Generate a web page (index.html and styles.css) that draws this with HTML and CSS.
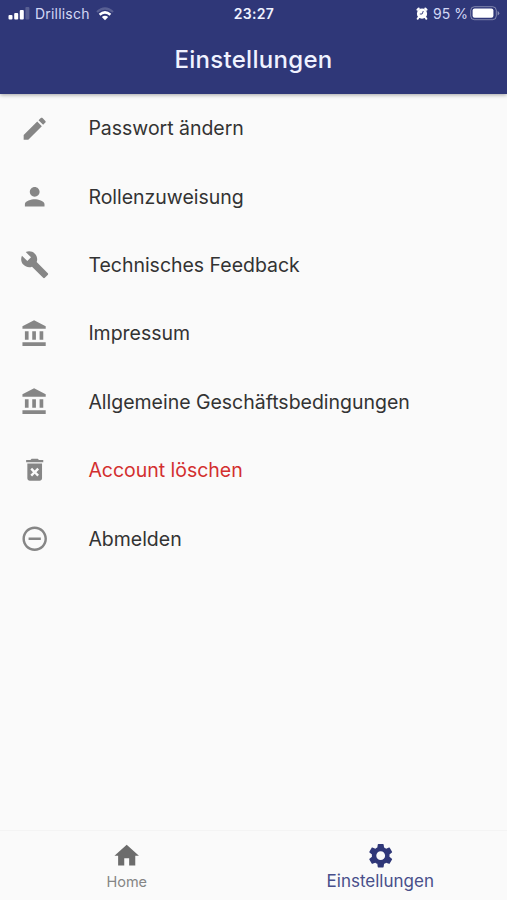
FILE: index.html
```html
<!DOCTYPE html>
<html lang="de">
<head>
<meta charset="utf-8">
<title>Einstellungen</title>
<link rel="stylesheet" href="styles.css">
</head>
<body>
<div class="app">
<header class="header">
<div class="status">
<div class="status-left">
<svg class="signal" width="22" height="13" viewBox="0 0 22 13" fill="#fff">
<rect x="0.5" y="8" width="4" height="4.5" rx="1"/>
<rect x="6.2" y="6" width="4" height="6.5" rx="1"/>
<rect x="11.8" y="3" width="4" height="9.5" rx="1"/>
<rect x="17.4" y="0" width="4" height="12.5" rx="1" opacity=".2"/>
</svg>
<span class="carrier">Drillisch</span>
<svg class="wifi" width="18" height="14" viewBox="0 0 18 14" fill="none" stroke="#fff">
<path d="M1 5Q9-2 17 5" stroke-width="2.3" opacity=".2"/>
<path d="M3.6 7.7Q9 3 14.4 7.7" stroke-width="2.5"/>
<path d="M5.8 10Q9 7.7 12.2 10L9 13.3z" fill="#fff" stroke="none"/>
</svg>
</div>
<span class="time">23:27</span>
<div class="status-right">
<svg class="alarm" width="12" height="13" viewBox="0 0 12 13">
<path d="M1.5 2.7L2.7 1.5M10.5 2.7L9.3 1.5M2.5 10.5L1.7 11.7M9.5 10.5L10.3 11.7" stroke="#fff" stroke-width="2" stroke-linecap="round"/>
<circle cx="6" cy="6.7" r="5.1" fill="#fff"/>
<path d="M7.3 4L6.1 7H3.800" fill="none" stroke="#2f3778" stroke-width=".9"/>
</svg>
<span class="percent">95 %</span>
<svg class="battery" width="30" height="15" viewBox="0 0 30 15">
<rect x=".7" y=".7" width="25.6" height="13" rx="3.8" fill="none" stroke="#fff" opacity=".4"/>
<rect x="2.6" y="2.6" width="20.8" height="9.2" rx="2" fill="#fff"/>
<path d="M27.6 5v4.6q1.700-.8 1.700-2.300t-1.700-2.300z" fill="#fff" opacity=".45"/>
</svg>
</div>
</div>
<h1 class="title">Einstellungen</h1>
</header>
<ul class="list">
<li class="item">
<svg class="icon" viewBox="0 0 24 24"><path d="M3 17.250V21h3.750L17.810 9.940l-3.750-3.750L3 17.250zM20.710 7.040c.39-.39.39-1.020 0-1.410l-2.340-2.340c-.39-.39-1.020-.39-1.410 0l-1.830 1.830 3.750 3.750 1.830-1.830z"/></svg>
<span>Passwort ändern</span>
</li>
<li class="item">
<svg class="icon" viewBox="0 0 24 24"><path d="M12 12c2.210 0 4-1.790 4-4s-1.790-4-4-4-4 1.790-4 4 1.790 4 4 4zm0 2c-2.670 0-8 1.340-8 4v2h16v-2c0-2.660-5.330-4-8-4z"/></svg>
<span>Rollenzuweisung</span>
</li>
<li class="item">
<svg class="icon" viewBox="0 0 24 24"><path d="M22.700 19l-9.100-9.100c.9-2.300.4-5-1.500-6.900-2-2-5-2.400-7.400-1.300L9 6 6 9 1.600 4.700C.4 7.100.9 10.100 2.900 12.100c1.900 1.900 4.600 2.400 6.900 1.500l9.100 9.100c.4.4 1 .4 1.400 0l2.300-2.300c.5-.4.5-1.100.1-1.400z"/></svg>
<span>Technisches Feedback</span>
</li>
<li class="item">
<svg class="icon" viewBox="0 0 24 24"><path d="M4 10v7h3v-7H4zm6 0v7h3v-7h-3zM2 22h19v-3H2v3zm14-12v7h3v-7h-3zm-4.500-9L2 6v2h19V6l-9.500-5z"/></svg>
<span>Impressum</span>
</li>
<li class="item">
<svg class="icon" viewBox="0 0 24 24"><path d="M4 10v7h3v-7H4zm6 0v7h3v-7h-3zM2 22h19v-3H2v3zm14-12v7h3v-7h-3zm-4.500-9L2 6v2h19V6l-9.500-5z"/></svg>
<span>Allgemeine Geschäftsbedingungen</span>
</li>
<li class="item danger">
<svg class="icon" viewBox="0 0 24 24"><path d="M6 19c0 1.100.9 2 2 2h8c1.100 0 2-.9 2-2V7H6v12zm2.460-7.120l1.410-1.410L12 12.590l2.120-2.120 1.410 1.410L13.410 14l2.120 2.120-1.410 1.410L12 15.410l-2.120 2.120-1.410-1.410L10.590 14l-2.130-2.120zM15.500 4l-1-1h-5l-1 1H5v2h14V4z"/></svg>
<span>Account löschen</span>
</li>
<li class="item">
<svg class="icon" viewBox="0 0 24 24"><path d="M7 11v2h10v-2H7zm5-9C6.480 2 2 6.480 2 12s4.480 10 10 10 10-4.480 10-10S17.520 2 12 2zm0 18c-4.410 0-8-3.590-8-8s3.590-8 8-8 8 3.590 8 8-3.590 8-8 8z"/></svg>
<span>Abmelden</span>
</li>
</ul>
<nav class="nav">
<a class="tab home">
<svg class="icon" viewBox="0 0 24 24"><path d="M10 20v-6h4v6h5v-8h3L12 3 2 12h3v8z"/></svg>
<span>Home</span>
</a>
<a class="tab active">
<svg class="icon" viewBox="0 0 24 24"><path d="M19.140 12.940c.04-.3.06-.61.06-.94 0-.32-.02-.64-.07-.94l2.030-1.580c.18-.14.23-.41.12-.61l-1.920-3.320c-.12-.22-.37-.29-.59-.22l-2.390.96c-.5-.38-1.030-.7-1.620-.94l-.36-2.540c-.04-.24-.24-.41-.48-.41h-3.840c-.24 0-.43.17-.47.41l-.36 2.540c-.59.24-1.130.57-1.620.94l-2.390-.96c-.22-.08-.47 0-.59.22L2.740 8.870c-.12.21-.08.47.12.61l2.030 1.580c-.05.3-.09.63-.09.94s.02.64.07.94l-2.030 1.580c-.18.14-.23.41-.12.61l1.920 3.320c.12.22.37.29.59.22l2.390-.96c.5.38 1.030.7 1.620.94l.36 2.540c.05.24.24.41.48.41h3.840c.24 0 .44-.17.47-.41l.36-2.540c.59-.24 1.130-.56 1.620-.94l2.390.96c.22.08.47 0 .59-.22l1.920-3.320c.12-.22.07-.47-.12-.61l-2.010-1.580zM12 15.600c-1.980 0-3.600-1.620-3.600-3.600s1.620-3.600 3.600-3.600 3.600 1.620 3.600 3.600-1.620 3.600-3.600 3.600z"/></svg>
<span>Einstellungen</span>
</a>
</nav>
</div>
</body>
</html>
```
FILE: styles.css
```css
*{box-sizing:border-box;}
body{
margin:0;
font-family:Inter,"Liberation Sans",sans-serif;
color:#333;
background:#fafafa;
}
.app{
display:flex;
flex-direction:column;
height:900px;
overflow:hidden;
}
.header{
height:94px;
flex:none;
background:#2f3778;
color:#f0f2ff;
box-shadow:0 1px 4px rgba(0,0,0,.35);
}
.status{
display:grid;
grid-template-columns:1fr auto 1fr;
align-items:center;
height:27px;
padding:0 7px 0 8px;
font-size:14px;
}
.status-left,
.status-right{
display:flex;
align-items:center;
}
.status-right{justify-content:flex-end;}
.carrier{
margin-left:5px;
color:#d3d8f5;
letter-spacing:.2px;
}
.wifi{margin-left:6px;}
.time{
font-weight:600;
letter-spacing:.3px;
}
.percent{
margin:0 2px 0 5px;
color:#d3d8f5;
}
.title{
margin:17px 0 0;
text-align:center;
font-size:24px;
line-height:32px;
font-weight:500;
letter-spacing:.3px;
}
.list{
flex:1;
margin:0;
padding:0;
list-style:none;
}
.item{
display:flex;
align-items:center;
height:68.4px;
padding-left:20px;
font-size:19.5px;
letter-spacing:-.02px;
}
.icon{
display:block;
flex:none;
width:29.4px;
height:29.4px;
fill:#868686;
}
.item span{margin-left:39px;}
.danger{color:#d32f2f;}
.nav{
display:flex;
flex:none;
height:70px;
border-top:1px solid #f4f4f4;
}
.tab{
flex:1;
display:flex;
flex-direction:column;
align-items:center;
padding-top:10px;
color:#858585;
font-size:14.5px;
line-height:22px;
}
.home span{padding-top:1px;}
.home .icon{fill:#6c6c6c;}
.active{
color:#484f8a;
font-size:17px;
}
.active .icon{fill:#2f3778;}
```
